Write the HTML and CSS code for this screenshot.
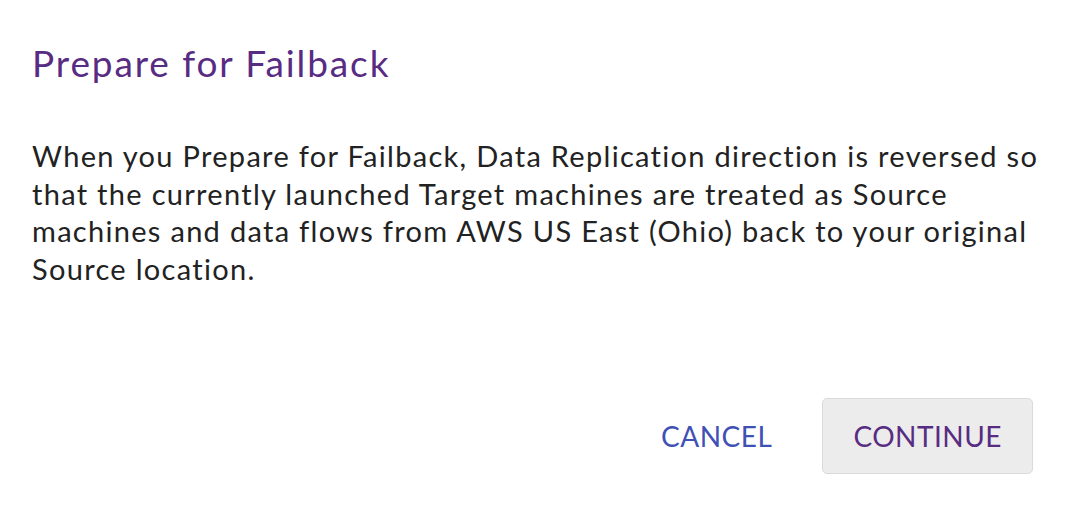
FILE: index.html
```html
<!DOCTYPE html>
<html>
<head>
<meta charset="utf-8">
<link rel="stylesheet" href="styles.css">
</head>
<body>
<div class="dialog">
  <h1 class="title">Prepare for Failback</h1>
  <p class="message">When you Prepare for Failback, Data Replication direction is reversed so that the currently launched Target machines are treated as Source machines and data flows from AWS US East (Ohio) back to your original Source location.</p>
  <div class="actions">
    <button class="btn btn-cancel">CANCEL</button>
    <button class="btn btn-continue">CONTINUE</button>
  </div>
</div>
</body>
</html>
```
FILE: styles.css
```css
html, body {
  margin: 0;
  padding: 0;
  background: #ffffff;
}
.dialog {
  width: 1072px;
  height: 524px;
  box-sizing: border-box;
  padding: 41px 24px 0 32px;
  font-family: Lato, "Open Sans", sans-serif;
  display: flex;
  flex-direction: column;
}
.title {
  margin: 0;
  font-size: 37px;
  line-height: 1.2;
  letter-spacing: 1.9px;
  font-weight: 400;
  color: #582c83;
}
.message {
  margin: 52px 0 0 0;
  font-size: 29px;
  line-height: 37.5px;
  letter-spacing: 1.3px;
  color: #222222;
}
.actions {
  margin-top: 111px;
  padding-right: 15px;
  display: flex;
  justify-content: flex-end;
  align-items: center;
  gap: 19px;
}
.btn {
  font-family: Lato, "Open Sans", sans-serif;
  font-size: 28px;
  letter-spacing: 0.5px;
  height: 76px;
  padding: 0 30px;
  border-radius: 5px;
  cursor: pointer;
}
.btn-cancel {
  background: transparent;
  border: 1px solid transparent;
  color: #3f51b5;
}
.btn-continue {
  background: #ececec;
  border: 1px solid #dadada;
  color: #582c83;
}
```
